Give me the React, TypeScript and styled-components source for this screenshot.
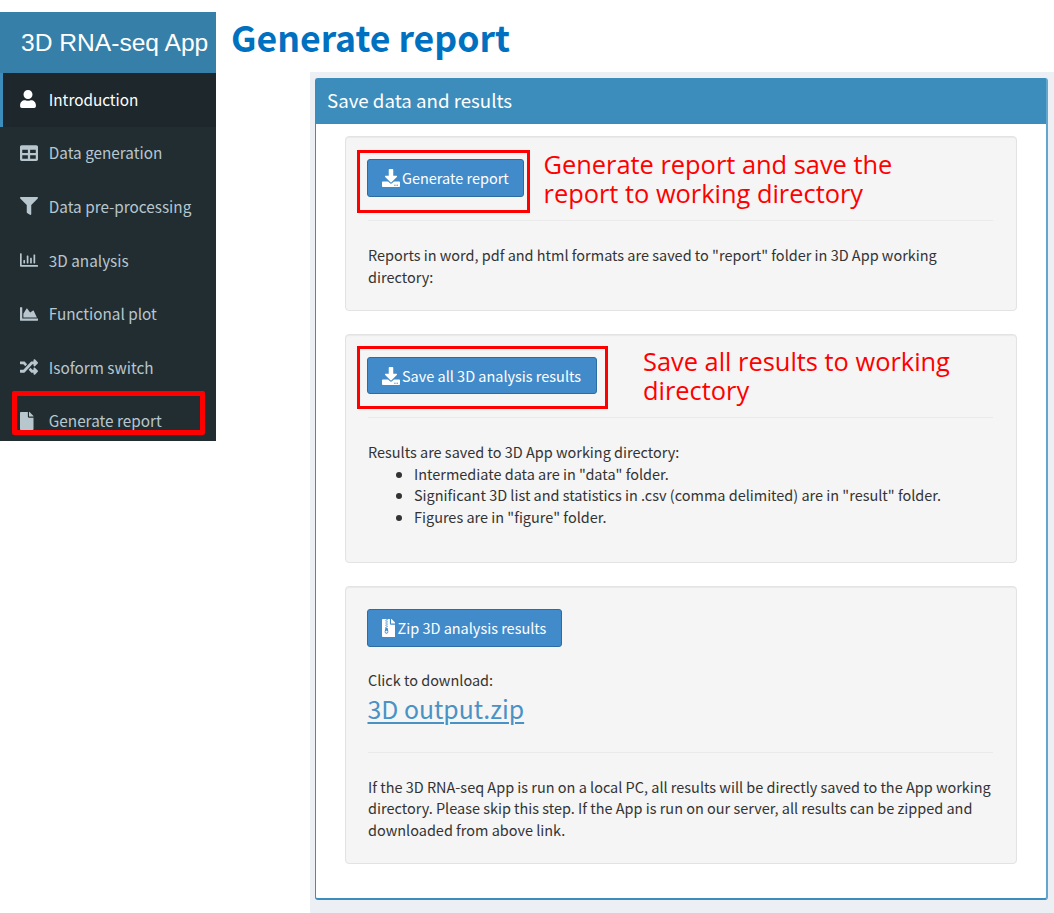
import React from "react";
import styled, { createGlobalStyle, css } from "styled-components";
import type { IconType } from "react-icons";
import {
  FaUser,
  FaTable,
  FaFilter,
  FaRegChartBar,
  FaChartArea,
  FaRandom,
  FaFile,
  FaDownload,
  FaFileArchive,
} from "react-icons/fa";

const sans = `"Noto Sans CJK SC", "Open Sans", sans-serif`;

const GlobalStyle = createGlobalStyle`
  *, *::before, *::after { box-sizing: border-box; }
  body {
    margin: 0;
    background: #fff;
    color: #333;
    font-family: ${sans};
    font-size: 14.47px;
    line-height: 21.7px;
  }
`;

const Page = styled.div`
  display: flex;
  width: 1054px;
  height: 913px;
  overflow: hidden;
`;

const Sidebar = styled.aside`
  flex: none;
  width: 216px;
  height: 429px;
  margin-top: 12px;
  overflow: hidden;
  background: #222d32;
`;

const Brand = styled.div`
  height: 61px;
  padding-left: 21px;
  background: #367fa9;
  color: #fff;
  font: 24.6px/61px "Liberation Sans", Arial, sans-serif;
  white-space: nowrap;
`;

const iconSize = css`
  flex: none;
  width: 18px;
  height: 18px;

  &[viewBox^="0 0 448"] {
    width: 16px;
  }
  &[viewBox^="0 0 384"] {
    width: 13.5px;
  }
`;

const NavItem = styled.a<{ $active?: boolean }>`
  display: flex;
  align-items: center;
  height: 53.6px;
  padding-left: 17px;
  border-left: 3px solid transparent;
  color: #b8c7ce;
  font-size: 15.3px;
  white-space: nowrap;

  ${({ $active }) =>
    $active &&
    css`
      border-left-color: #3c8dbc;
      background: #1e282c;
      color: #fff;
    `}
`;

const NavIcon = styled.span`
  display: flex;
  flex: none;
  width: 28.8px;
  padding-bottom: 1px;

  svg {
    ${iconSize}
  }
`;

const NavLabel = styled.span`
  padding-bottom: 0.2px;
`;

const NavSlot = styled.div`
  position: relative;
`;

const NavHighlight = styled.span`
  position: absolute;
  top: -3.6px;
  left: 12px;
  width: 193px;
  height: 44px;
  border: 5px solid #f00;
  border-radius: 2px;
`;

const Main = styled.main`
  display: flex;
  flex: 1;
  flex-direction: column;
`;

const PageTitle = styled.h1`
  height: 72px;
  margin: 0;
  padding: 1px 0 0 15px;
  color: #0070c0;
  font-size: 35.6px;
  font-weight: 700;
  line-height: 72px;
`;

const Content = styled.section`
  flex: 1;
  margin-left: 94px;
  padding: 6px 6px 13px 5px;
  background: #ecf0f5;
`;

const Box = styled.div`
  height: 822px;
  border: 1px solid #3c8dbc;
  border-right: 2px solid #62a5cd;
  border-bottom-width: 2px;
  border-radius: 3px;
  background: #fff;
`;

const BoxHeader = styled.h3`
  height: 45px;
  margin: 0;
  padding-left: 11px;
  background: #3c8dbc;
  color: #fff;
  font-size: 18.7px;
  font-weight: 400;
  line-height: 41px;
`;

const BoxBody = styled.div`
  display: flex;
  flex-direction: column;
  gap: 23px;
  padding: 12px 29px 0;
`;

const Well = styled.div<{ $height: number }>`
  height: ${({ $height }) => $height}px;
  padding: 22px 23px 0 21.5px;
  border: 1px solid #e3e3e3;
  border-radius: 4px;
  background: #f5f5f5;
  box-shadow: inset 0 1px 1px rgba(0, 0, 0, 0.05);
`;

const ActionSlot = styled.div<{ $width: number; $height: number }>`
  position: relative;
  width: ${({ $width }) => $width}px;
  height: ${({ $height }) => $height}px;
  margin-left: -0.5px;
`;

const ActionButton = styled.button`
  display: flex;
  align-items: center;
  width: 100%;
  height: 100%;
  padding: 0 0 0 13.5px;
  border: 1px solid #2d6ca2;
  border-radius: 3px;
  background: #428bca;
  color: #fff;
  font: 400 14.47px/20px ${sans};
  white-space: nowrap;

  svg {
    ${iconSize}
    margin-right: 2.5px;
  }
`;

const ActionHighlight = styled.span<{ $width: number; $top: number }>`
  position: absolute;
  top: ${({ $top }) => $top}px;
  left: -10px;
  width: ${({ $width }) => $width}px;
  height: 63px;
  border: 3px solid #f00;
`;

const Note = styled.p<{ $left: number; $top: number }>`
  position: absolute;
  top: ${({ $top }) => $top}px;
  left: ${({ $left }) => $left}px;
  margin: 0;
  color: #f00;
  font: 25.4px/29px "Open Sans", sans-serif;
  white-space: nowrap;
`;

const Rule = styled.hr`
  height: 1px;
  margin: 23px 0 23px;
  border: 0;
  background: #eaeaea;
`;

const Text = styled.p`
  margin: 0;
  padding-left: 0.5px;
  white-space: nowrap;
`;

const BulletList = styled.ul`
  margin: 0;
  padding-left: 46.5px;
`;

const Download = styled.div`
  padding: 21.5px 0 1.5px;
`;

const DownloadLink = styled.a`
  display: block;
  width: max-content;
  color: #4a92c5;
  font-size: 24.8px;
  line-height: 37px;
  text-decoration: underline;
  text-decoration-thickness: 2px;
  text-underline-offset: 3px;
`;

type NavEntry = { label: string; icon: IconType; active?: boolean };

const navItems: NavEntry[] = [
  { label: "Introduction", icon: FaUser, active: true },
  { label: "Data generation", icon: FaTable },
  { label: "Data pre-processing", icon: FaFilter },
  { label: "3D analysis", icon: FaRegChartBar },
  { label: "Functional plot", icon: FaChartArea },
  { label: "Isoform switch", icon: FaRandom },
];

function NavLink({ label, icon: Icon, active }: NavEntry) {
  return (
    <NavItem $active={active}>
      <NavIcon>
        <Icon />
      </NavIcon>
      <NavLabel>{label}</NavLabel>
    </NavItem>
  );
}

export default function App() {
  return (
    <>
      <GlobalStyle />
      <Page>
        <Sidebar>
          <Brand>3D RNA-seq App</Brand>
          <nav>
            {navItems.map((item) => (
              <NavLink key={item.label} {...item} />
            ))}
            <NavSlot>
              <NavLink label="Generate report" icon={FaFile} />
              <NavHighlight />
            </NavSlot>
          </nav>
        </Sidebar>
        <Main>
          <PageTitle>Generate report</PageTitle>
          <Content>
            <Box>
              <BoxHeader>Save data and results</BoxHeader>
              <BoxBody>
                <Well $height={175}>
                  <ActionSlot $width={157} $height={38}>
                    <ActionButton>
                      <FaDownload />
                      Generate report
                    </ActionButton>
                    <ActionHighlight $width={173} $top={-9} />
                    <Note $left={176.5} $top={-9}>
                      Generate report and save the
                      <br />
                      report to working directory
                    </Note>
                  </ActionSlot>
                  <Rule />
                  <Text>
                    Reports in word, pdf and html formats are saved to "report" folder in 3D App working
                    <br />
                    directory:
                  </Text>
                </Well>
                <Well $height={229}>
                  <ActionSlot $width={230} $height={37}>
                    <ActionButton>
                      <FaDownload />
                      Save all 3D analysis results
                    </ActionButton>
                    <ActionHighlight $width={251} $top={-11} />
                    <Note $left={276} $top={-10}>
                      Save all results to working
                      <br />
                      directory
                    </Note>
                  </ActionSlot>
                  <Rule />
                  <Text>Results are saved to 3D App working directory:</Text>
                  <BulletList>
                    <li>Intermediate data are in "data" folder.</li>
                    <li>Significant 3D list and statistics in .csv (comma delimited) are in "result" folder.</li>
                    <li>Figures are in "figure" folder.</li>
                  </BulletList>
                </Well>
                <Well $height={278}>
                  <ActionSlot $width={195} $height={38}>
                    <ActionButton>
                      <FaFileArchive />
                      Zip 3D analysis results
                    </ActionButton>
                  </ActionSlot>
                  <Download>
                    <Text>Click to download:</Text>
                    <DownloadLink>3D output.zip</DownloadLink>
                  </Download>
                  <Rule />
                  <Text>
                    If the 3D RNA-seq App is run on a local PC, all results will be directly saved to the App working
                    <br />
                    directory. Please skip this step. If the App is run on our server, all results can be zipped and
                    <br />
                    downloaded from above link.
                  </Text>
                </Well>
              </BoxBody>
            </Box>
          </Content>
        </Main>
      </Page>
    </>
  );
}
